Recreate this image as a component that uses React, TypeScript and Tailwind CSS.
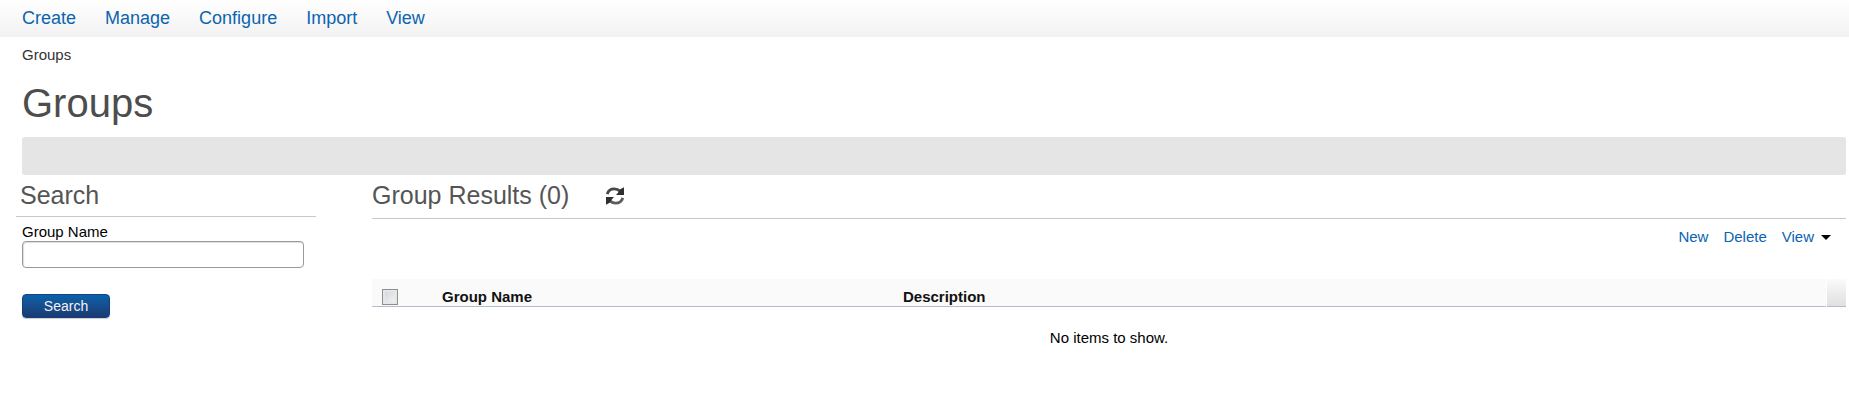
import React from "react";

const menu = ["Create", "Manage", "Configure", "Import", "View"];

function RefreshIcon() {
  return (
    <svg width="18" height="18" viewBox="0 0 18 18" fill="none" aria-hidden="true">
      <path d="M1.2 7.2C2.2 3.6 4.8 1.9 8.3 1.9C10.6 1.9 12.4 2.6 13.8 4" stroke="#484848" strokeWidth="2.8" />
      <path d="M18 0.3V8H10L12 5.8L14.2 2.2Z" fill="#303030" />
      <path d="M16.8 10.8C15.8 14.4 13.2 16.1 9.7 16.1C7.4 16.1 5.6 15.4 4.2 14" stroke="#5c5c5c" strokeWidth="2.8" />
      <path d="M0 17.7V10H8L6 12.2L3.8 15.8Z" fill="#303030" />
    </svg>
  );
}

export default function App() {
  return (
    <div className="bg-white font-['Liberation_Sans',Arial,sans-serif] text-[15px] leading-5 text-black">
      <nav className="flex h-[37px] gap-[29px] bg-linear-to-b from-white to-[#f2f2f2] px-[22px] pt-1.5 text-lg leading-6 text-[#0b64b0]">
        {menu.map((item) => (
          <a key={item} href="#">{item}</a>
        ))}
      </nav>

      <header className="pt-2 pr-[3px] pl-[22px]">
        <div className="text-[#333]">Groups</div>
        <h1 className="mt-3.5 text-[40px] leading-12 text-[#4d4d4d]">Groups</h1>
        <div className="mt-2.5 h-[38px] rounded-[3px] bg-[#e5e5e5]" />
      </header>

      <main className="flex gap-14 pt-1 pr-[3px] pl-4">
        <form className="w-[300px] shrink-0" onSubmit={(e) => e.preventDefault()}>
          <h2 className="border-b border-[#c8c8c8] pb-[5px] pl-1 text-[25px] leading-8 text-[#555]">Search</h2>
          <div className="flex flex-col items-start pt-1.5 pr-3 pl-1.5">
            <label htmlFor="group-name" className="leading-[18px]">Group Name</label>
            <input
              id="group-name"
              type="text"
              className="h-[27px] w-full rounded-[4px] border border-[#999] px-1.5 shadow-[inset_1px_1px_1px_#ddd] outline-none"
            />
            <button
              type="submit"
              className="mt-[26px] h-6 w-[88px] rounded-[4px] border border-[#14407e] bg-linear-to-b from-[#0562ab] to-[#1a3a72] text-sm leading-5 text-[#f2f2f2] shadow-[0_1px_1px_#ccc]"
            >
              Search
            </button>
          </div>
        </form>

        <section className="min-w-0 flex-1">
          <div className="flex items-center gap-[37px] border-b border-[#c8c8c8] pb-[7px]">
            <h2 className="text-[25px] leading-8 text-[#555]">Group Results (0)</h2>
            <button type="button" aria-label="Refresh" className="pt-0.5">
              <RefreshIcon />
            </button>
          </div>
          <div className="mt-2 flex justify-end gap-[15px] pr-[15px] text-[#0b64b0]">
            <a href="#">New</a>
            <a href="#">Delete</a>
            <a href="#" className="flex items-center gap-[7px]">
              View
              <svg width="10" height="5" viewBox="0 0 10 5" aria-hidden="true">
                <path d="M0 0H10L5 5Z" fill="#000" />
              </svg>
            </a>
          </div>
          <table className="mt-8 w-full table-fixed border-collapse text-left">
            <thead>
              <tr className="h-[27px] border-b border-[#b4bccb] bg-[#fafafa]">
                <th className="w-[70px] p-0 pt-2.5 pl-2.5 align-top">
                  <input
                    type="checkbox"
                    aria-label="Select all groups"
                    className="block size-4 appearance-none border border-[#8e8f8f] bg-linear-to-br from-[#cfd3d9] to-[#f6f6f6] shadow-[inset_0_0_0_2px_#e6e6e8]"
                  />
                </th>
                <th className="w-[461px] p-0 pt-[9px] align-top leading-[18px] text-[#111]">Group Name</th>
                <th className="p-0 pt-[9px] align-top leading-[18px] text-[#111]">Description</th>
                <td className="w-5 border-l border-white bg-linear-to-b from-[#fafafa] to-[#e0e0e0] p-0" />
              </tr>
            </thead>
            <tbody>
              <tr>
                <td colSpan={4} className="p-0 pt-[21px] text-center">No items to show.</td>
              </tr>
            </tbody>
          </table>
        </section>
      </main>
    </div>
  );
}
